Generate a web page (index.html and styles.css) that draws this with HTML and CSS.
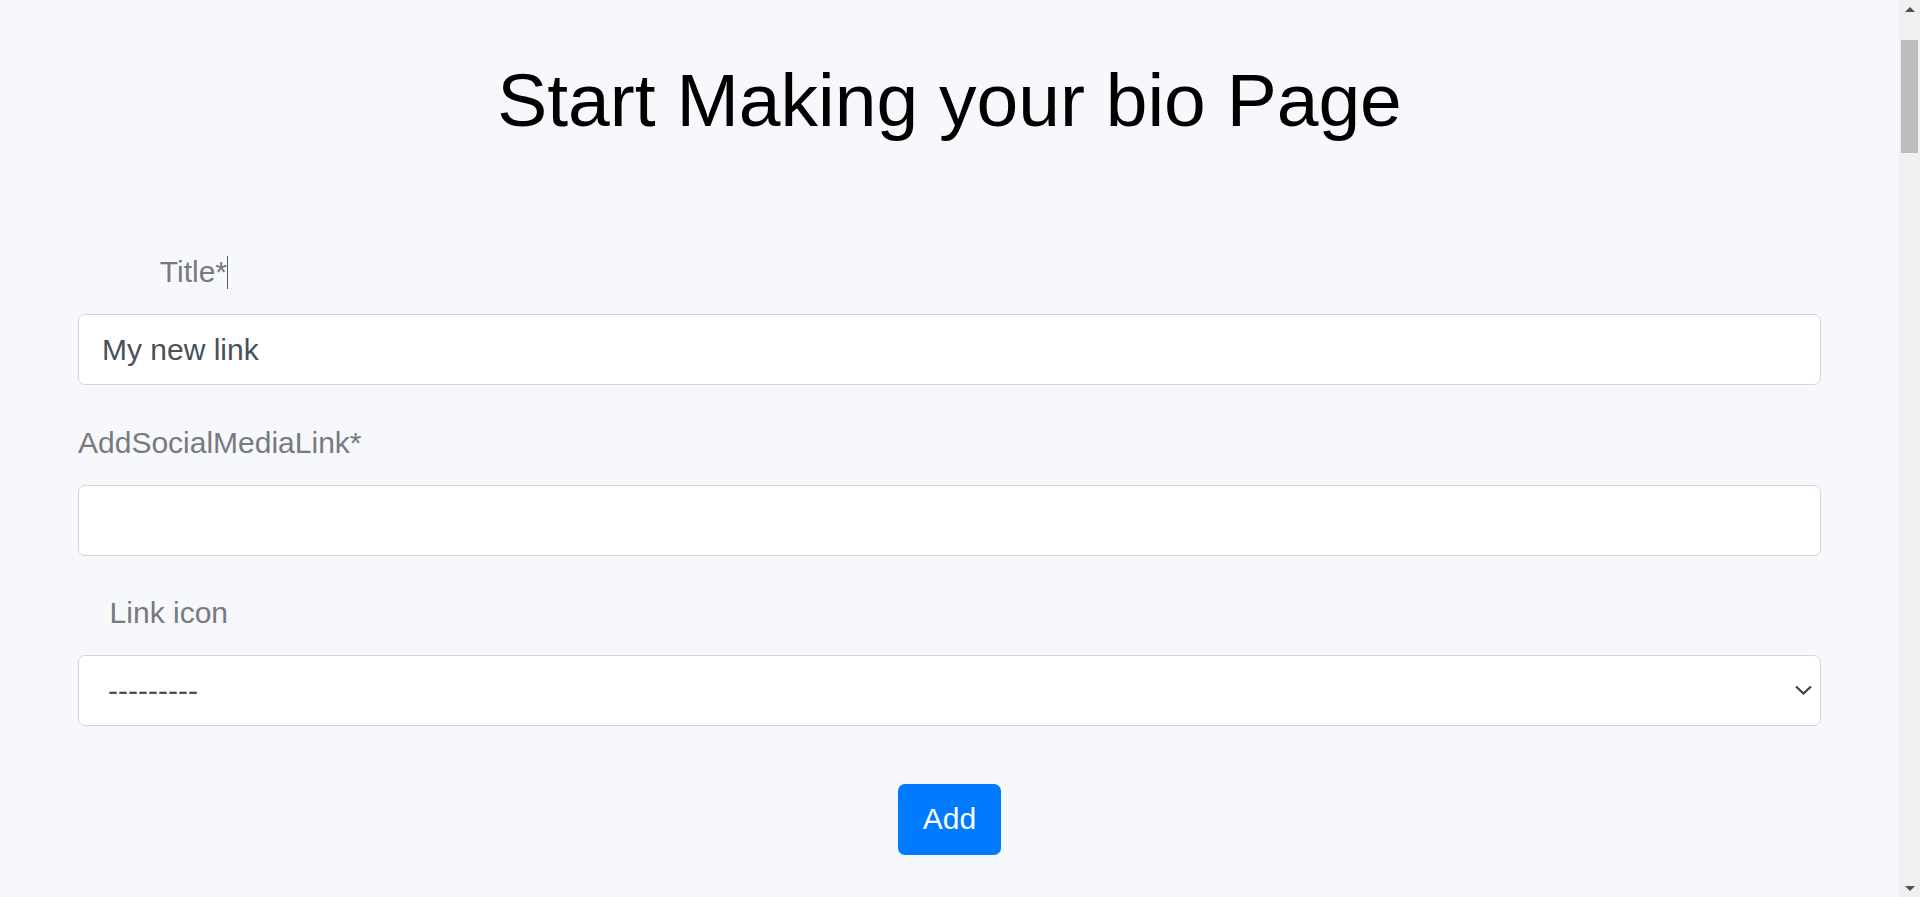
FILE: index.html
```html
<!DOCTYPE html>
<html lang="en">
<head>
<meta charset="utf-8">
<title>Start Making your bio Page</title>
<link rel="stylesheet" href="styles.css">
</head>
<body>
<div class="window">
  <main class="page">
    <h1 class="heading">Start Making your bio Page</h1>
    <form class="form">
      <div class="group">
        <label class="label" for="title">Title*<span class="caret"></span></label>
        <input class="control" id="title" type="text" value="My new link">
      </div>
      <div class="group">
        <label class="label" for="link">AddSocialMediaLink*</label>
        <input class="control" id="link" type="text">
      </div>
      <div class="group">
        <label class="label" for="icon">Link icon</label>
        <div class="select-wrap">
          <select class="control select" id="icon">
            <option>---------</option>
          </select>
          <svg class="chevron" width="17" height="10" viewBox="0 0 17 10"><polyline points="1,1.5 8.5,8.5 16,1.5" fill="none" stroke="#3d4148" stroke-width="2.2"/></svg>
        </div>
      </div>
      <div class="actions">
        <button class="btn" type="button">Add</button>
      </div>
    </form>
  </main>
  <div class="scrollbar">
    <div class="arrow up"></div>
    <div class="thumb"></div>
    <div class="spacer"></div>
    <div class="arrow down"></div>
  </div>
</div>
</body>
</html>
```
FILE: styles.css
```css
html, body {
  margin: 0;
  padding: 0;
  height: 100%;
  overflow: hidden;
}
body {
  background: #f7f8fc;
  font-family: "Liberation Sans", Arial, sans-serif;
}
.window {
  display: flex;
  height: 100vh;
}
.page {
  flex: 1;
  padding: 55px 78px 0;
  min-width: 0;
}
.heading {
  margin: 0;
  font-size: 75px;
  font-weight: 400;
  line-height: 90px;
  text-align: center;
  color: #000;
}
.form {
  margin-top: 104px;
}
.group {
  margin-bottom: 34.5px;
}
.label {
  display: block;
  width: 150px;
  text-align: right;
  font-size: 30px;
  line-height: 45px;
  color: #777a7e;
  white-space: nowrap;
  margin-bottom: 20px;
}
.caret {
  display: inline-block;
  width: 1px;
  height: 33px;
  background: #5a5a5a;
  vertical-align: -7px;
}
.control {
  display: block;
  box-sizing: border-box;
  width: 100%;
  height: 71px;
  margin: 0;
  padding: 0 23px;
  border: 1px solid #d3d5dc;
  border-radius: 7px;
  background: #fff;
  font-family: "Liberation Sans", Arial, sans-serif;
  font-size: 30px;
  color: #495057;
  outline: none;
}
.select-wrap {
  position: relative;
}
.select {
  -webkit-appearance: none;
  appearance: none;
  padding-left: 29px;
}
.chevron {
  position: absolute;
  right: 9px;
  top: 30px;
}
.actions {
  display: flex;
  justify-content: center;
  padding-top: 23px;
}
.btn {
  height: 71px;
  padding: 0 25px;
  border: none;
  border-radius: 7px;
  background: #007bff;
  color: #fff;
  font-family: "Liberation Sans", Arial, sans-serif;
  font-size: 30px;
}
.scrollbar {
  width: 21px;
  flex: none;
  background: #f0f0f0;
  display: flex;
  flex-direction: column;
  align-items: center;
}
.arrow {
  width: 0;
  height: 0;
  border-left: 5px solid transparent;
  border-right: 5px solid transparent;
}
.arrow.up {
  margin-top: 7px;
  border-bottom: 5px solid #505050;
}
.arrow.down {
  margin-bottom: 6px;
  border-top: 5px solid #505050;
}
.thumb {
  margin-top: 28px;
  width: 17px;
  height: 113px;
  background: #bcbcbc;
}
.spacer {
  flex: 1;
}
```
